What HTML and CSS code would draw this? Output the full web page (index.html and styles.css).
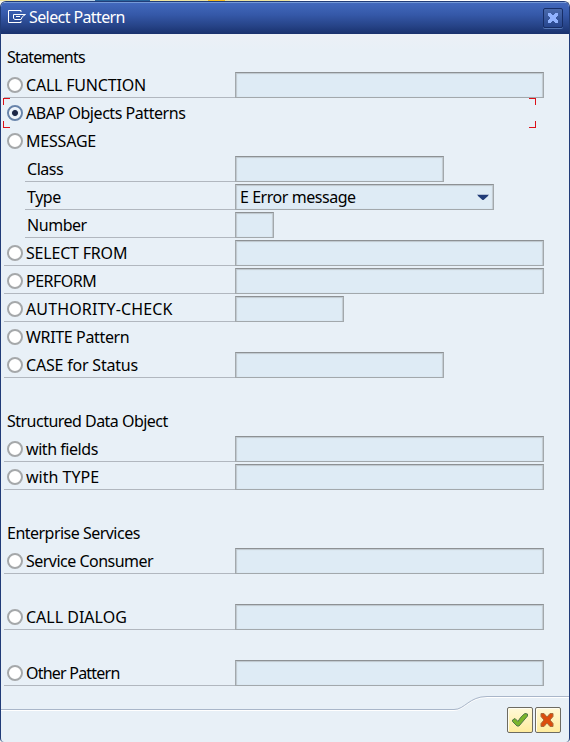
FILE: index.html
```html
<!DOCTYPE html>
<html lang="en">
<head>
<meta charset="utf-8">
<title>Select Pattern</title>
<link rel="stylesheet" href="styles.css">
</head>
<body>
<div class="strip"></div>
<main class="dialog">
  <header class="titlebar">
    <svg class="logo" width="19" height="14" viewBox="0 0 19 14" fill="none" stroke="#fff"><path d="M13 2V.5H.5v12H13V11M17.500 4.500H5.500V8.500L7 9.500H13L14.500 6.500L17.500 4.500M8 6.500h4"/></svg>
    <h1>Select Pattern</h1>
    <button class="close" aria-label="Close"><svg width="12" height="12" viewBox="0 0 12 12"><path d="M1 1h3v1h1v1h2V2h1V1h3v3h-1v1H9v2h1v1h1v3H8v-1H7V9H5v1H4v1H1V8h1V7h1V5H2V4H1z" fill="#91b3ff"/></svg></button>
  </header>
  <form class="form">
    <div class="row heading"><span class="tightest">Statements</span></div>
    <div class="row"><label class="lined"><i class="radio"></i><span class="loose">CALL FUNCTION</span></label><div class="field full"></div></div>
    <div class="row focused"><label><i class="radio on"></i><span>ABAP Objects Patterns</span></label><b class="tl"></b><b class="tr"></b><b class="bl"></b><b class="br"></b></div>
    <div class="row"><label><i class="radio"></i><span class="loose">MESSAGE</span></label></div>
    <div class="row sub"><label class="lined"><span>Class</span></label><div class="field medium"></div></div>
    <div class="row sub"><label class="lined"><span>Type</span></label><div class="field select"><span>E Error message</span><svg width="12" height="7" viewBox="0 0 12 7"><path d="M0 1h12" stroke="#8795b5"/><path d="M1 1h10v1L6.500 6h-1L1 2z" fill="#213c78"/></svg></div></div>
    <div class="row sub"><label class="lined"><span>Number</span></label><div class="field tiny"></div></div>
    <div class="row"><label class="lined"><i class="radio"></i><span class="loose">SELECT FROM</span></label><div class="field full"></div></div>
    <div class="row"><label class="lined"><i class="radio"></i><span class="tight">PERFORM</span></label><div class="field full"></div></div>
    <div class="row"><label class="lined"><i class="radio"></i><span class="widest">AUTHORITY-CHECK</span></label><div class="field short"></div></div>
    <div class="row"><label><i class="radio"></i><span class="relaxed">WRITE Pattern</span></label></div>
    <div class="row"><label class="lined"><i class="radio"></i><span class="loose">CASE for Status</span></label><div class="field medium"></div></div>
    <div class="row"></div>
    <div class="row heading"><span class="tight">Structured Data Object</span></div>
    <div class="row"><label class="lined"><i class="radio"></i><span>with fields</span></label><div class="field full"></div></div>
    <div class="row"><label class="lined"><i class="radio"></i><span class="wide">with TYPE</span></label><div class="field full"></div></div>
    <div class="row"></div>
    <div class="row heading"><span class="tight">Enterprise Services</span></div>
    <div class="row"><label class="lined"><i class="radio"></i><span class="tight">Service Consumer</span></label><div class="field full"></div></div>
    <div class="row"></div>
    <div class="row"><label class="lined"><i class="radio"></i><span class="wide">CALL DIALOG</span></label><div class="field full"></div></div>
    <div class="row"></div>
    <div class="row"><label class="lined"><i class="radio"></i><span class="tightest">Other Pattern</span></label><div class="field full"></div></div>
  </form>
  <footer class="footer">
    <svg class="curve" width="568" height="18" viewBox="0 0 568 18" fill="none"><path d="M0 15.500H453C464 15.500 468 2.500 486 2.500H568" stroke="#fff"/><path d="M0 14.500H453C464 14.500 468 1.500 486 1.500H568" stroke="#a9b6c9"/></svg>
    <button class="action" aria-label="Continue"><svg width="18" height="16" viewBox="0 0 18 16"><path d="M1.500 8L4 6.500l3 3C9 6 11 3.500 14 1.500l2.500.5v2L8 14H6L1.500 9.500z" fill="#7bb52b" stroke="#51764a"/></svg></button>
    <button class="action cancel" aria-label="Cancel"><svg width="16" height="16" viewBox="0 0 16 16"><path d="M2 1.500h3L8 5l3-3.500h3v3L11 8l3 3.500v3h-3L8 11l-3 3.500H2v-3L5 8 2 4.500z" fill="#dc4d0d" stroke="#a66b3c"/></svg></button>
  </footer>
</main>
</body>
</html>
```
FILE: styles.css
```css
* { box-sizing: border-box; }
body { margin: 0; width: 570px; height: 742px; overflow: hidden; background: #f4f4ed; font: 16px/26px "Noto Sans", sans-serif; color: #000; }
.strip { height: 1px; background: linear-gradient(90deg, #eee4a0 0 60px, #b9d3e8 60px 95px, #26639c 95px 150px, #eee4a0 150px 208px, #f9be20 208px 225px, #eee4a0 225px 290px, #fff 290px); }
.dialog { height: 741px; display: flex; flex-direction: column; border: 1px solid #213c78; border-bottom-width: 0; border-radius: 6px 6px 4px 4px; background: #e8f0f7; overflow: hidden; }
.titlebar { height: 32px; flex: none; display: flex; align-items: center; padding: 0 6px 0 7px; background: linear-gradient(#7599d6 0 1px, #4269bd 1px, #3558a8 40%, #264387 75%, #19316d); color: #fff; }
.logo { margin: 0 2px 2px 0; }
h1 { margin: 0 0 2px; font-size: 16px; font-weight: 400; letter-spacing: -.6px; flex: 1; }
button { display: flex; align-items: center; justify-content: center; padding: 0; }
.close { width: 20px; height: 20px; border: 1px solid #172e67; border-radius: 2px; background: linear-gradient(#4969ab, #27468f); box-shadow: 0 1px #5577b5; }
.form { flex: none; padding: 10px 0 0 3px; background: linear-gradient(#ecf0f6, #e8f0f7 16px); }
.row { position: relative; height: 28px; display: flex; }
label { width: 231px; height: 26px; display: flex; align-items: center; padding-left: 3px; white-space: nowrap; }
.lined { border-bottom: 1px solid #b1b7bf; }
.row span { letter-spacing: -.45px; }
.row .tightest { letter-spacing: -.78px; }
.row .tight { letter-spacing: -.52px; }
.row .relaxed { letter-spacing: -.35px; }
.row .loose { letter-spacing: -.2px; }
.row .wide { letter-spacing: 0; }
.row .widest { letter-spacing: .13px; }
.heading { padding-left: 3px; }
.radio { flex: none; width: 16px; height: 16px; margin-right: 3px; border: 2px solid #a5a8aa; border-radius: 50%; background: #fff; }
.radio.on { border-color: #6884aa; background: radial-gradient(circle, #1c2747 0 2.500px, #e2edf8 3.500px, #fff 6px); }
.sub { padding-left: 21px; }
.sub label { width: 210px; padding-left: 2px; }
.field { height: 26px; border: 1px solid #a2a8ac; border-top-color: #8d9194; background: #deebf5; box-shadow: inset 1px 1px 1px #bec7ce, inset -1px 0 1px #c1c9cf; }
.full { width: 309px; }
.medium { width: 209px; }
.short { width: 109px; }
.tiny { width: 39px; }
.select { width: 259px; display: flex; align-items: center; justify-content: space-between; padding: 0 4px; }
.focused b { position: absolute; width: 7px; height: 7px; border: 0 solid #dc1018; }
.focused .tl { left: -1px; top: -2px; border-width: 1px 0 0 1px; }
.focused .tr { left: 525px; top: -2px; border-width: 1px 1px 0 0; }
.focused .bl { left: -1px; top: 21px; border-width: 0 0 1px 1px; }
.focused .br { left: 525px; top: 21px; border-width: 0 1px 1px 0; }
.footer { position: relative; flex: 1; display: flex; justify-content: flex-end; gap: 2px; padding: 19px 8px 0 0; }
.curve { position: absolute; left: 0; top: 7px; }
.action { position: relative; width: 26px; height: 26px; border: 1px solid #6d6b61; border-radius: 2px; background: linear-gradient(#fff9d8, #ffec9d); box-shadow: inset 1px 1px #fffdf0; }
.cancel { padding-right: 2px; }
```
